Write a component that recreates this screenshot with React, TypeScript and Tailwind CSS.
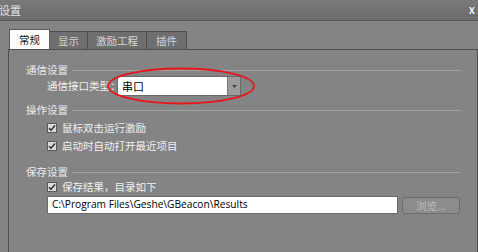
import React from "react";

const cjk = '"Noto Sans CJK SC", "Noto Sans", sans-serif';

function Check({ label }: { label: string }) {
  return (
    <div className="flex items-center h-[16px] pl-[38px]">
      <div className="w-[10px] h-[10px] bg-[#d9d9d9] border border-[#5a5a5a] flex items-center justify-center">
        <svg width="8" height="8" viewBox="0 0 8 8">
          <path d="M1 4.2 L3 6.3 L7 1.5" stroke="#2a2a2a" strokeWidth="1.4" fill="none" />
        </svg>
      </div>
      <span className="ml-[5px] text-[10.5px] text-[#f0f0f0] leading-none">{label}</span>
    </div>
  );
}

function Header({ label }: { label: string }) {
  return (
    <div className="flex items-center h-[12px] pl-[17px] pr-[17px]">
      <span className="text-[10.5px] text-[#ececec] leading-none">{label}</span>
      <div className="flex-1 ml-[4px] h-px bg-[#a2a2a2]" />
    </div>
  );
}

export default function App() {
  return (
    <div
      className="relative w-[478px] h-[252px] overflow-hidden bg-[#848484]"
      style={{ fontFamily: cjk }}
    >
      {/* title bar */}
      <div className="h-[21px] bg-gradient-to-b from-[#7a7a7a] to-[#6b6b6b] border-b border-[#545454] flex items-center justify-between">
        <span className="ml-[-1px] text-[11px] text-[#e4e4e4] leading-none">设置</span>
        <span className="mr-[3px] mt-[-1px] text-[11px] font-bold text-[#f4f4f4] leading-none [text-shadow:0_0_1px_#333]">x</span>
      </div>

      {/* tabs */}
      <div className="flex items-end pl-[9px] h-[28px]">
        <div className="h-[20px] w-[41px] bg-[#fdfdfd] border border-b-0 border-[#5a5a5a] flex items-center justify-center text-[10.5px] text-[#111]">
          常规
        </div>
        <div className="h-[18px] w-[38px] bg-[#6e6e6e] border border-l-0 border-b-0 border-[#4f4f4f] flex items-center justify-center text-[10.5px] text-[#d6d6d6]">
          显示
        </div>
        <div className="h-[18px] w-[59px] bg-[#6e6e6e] border border-l-0 border-b-0 border-[#4f4f4f] flex items-center justify-center text-[10.5px] text-[#d6d6d6]">
          激励工程
        </div>
        <div className="h-[18px] w-[40px] bg-[#6e6e6e] border border-l-0 border-b-0 border-[#4f4f4f] flex items-center justify-center text-[10.5px] text-[#d6d6d6]">
          插件
        </div>
      </div>

      {/* panel */}
      <div className="ml-[8px] w-[470px] h-[203px] border-t border-l border-r border-[#4f4f4f] pt-[14px]">
        <Header label="通信设置" />
        <div className="flex items-center h-[20px] pl-[38px]">
          <span className="w-[70px] text-[10.5px] text-[#f0f0f0] leading-none whitespace-nowrap">通信接口类型：</span>
          <div className="w-[124px] h-[20px] bg-white border border-[#6a6a6a] flex">
            <span className="flex-1 pl-[4px] flex items-center text-[11px] text-black">串口</span>
            <div className="w-[13px] bg-[#9c9c9c] border-l border-[#7a7a7a] flex items-center justify-center">
              <svg width="5" height="3" viewBox="0 0 5 3">
                <path d="M0 0 H5 L2.5 3 Z" fill="#444" />
              </svg>
            </div>
          </div>
        </div>

        <div className="mt-[8px]">
          <Header label="操作设置" />
        </div>
        <div className="mt-[4px]">
          <Check label="鼠标双击运行激励" />
        </div>
        <div className="mt-[2px]">
          <Check label="启动时自动打开最近项目" />
        </div>

        <div className="mt-[12px]">
          <Header label="保存设置" />
        </div>
        <div className="mt-[1px]">
          <Check label="保存结果，目录如下" />
        </div>
        <div className="mt-[1px] flex items-start pl-[38px]">
          <div
            className="w-[351px] h-[18px] bg-white border border-[#6a6a6a] pl-[4px] flex items-center text-[10.2px] text-black whitespace-nowrap"
            style={{ fontFamily: '"Open Sans", "Noto Sans", sans-serif' }}
          >
            C:\Program Files\Geshe\GBeacon\Results
          </div>
          <div className="ml-[4px] mt-[1px] w-[58px] h-[17px] rounded-[3px] bg-[#8c8c8c] border border-[#6c6c6c] flex items-center justify-center text-[10.5px] text-[#bdbdbd]">
            浏览...
          </div>
        </div>
      </div>

      {/* red ellipse annotation */}
      <svg className="absolute left-0 top-0 pointer-events-none" width="478" height="252">
        <ellipse cx="181" cy="86" rx="73" ry="17.5" fill="none" stroke="#e8151b" strokeWidth="1.8" />
      </svg>
    </div>
  );
}
